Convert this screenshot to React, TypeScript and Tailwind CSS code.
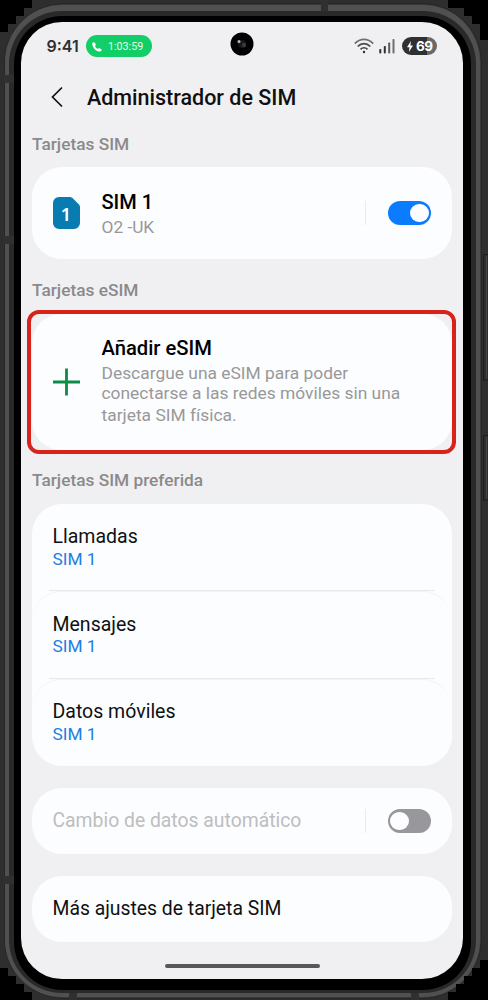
import type { ReactNode } from "react";

function SectionLabel({ children }: { children: ReactNode }) {
  return <h2 className="-mt-[0.5px] mb-[0.5px] pl-[11px] text-[17.3px] leading-5 font-medium text-[#8a8a8c]">{children}</h2>;
}

function Card({ className, children }: { className: string; children: ReactNode }) {
  return <section className={`mr-[11px] ml-[10.5px] rounded-[30px] bg-[#fcfdfe] ${className}`}>{children}</section>;
}

function Toggle({ on }: { on: boolean }) {
  return (
    <div className="flex items-center">
      <div className="mr-[21.5px] h-6 w-px bg-[#ebebed]" />
      <button
        role="switch"
        aria-checked={on}
        className={`flex h-6 w-[43.5px] items-center rounded-full px-[2.5px] ${on ? "justify-end bg-[#0a7cfd]" : "justify-start bg-[#98979c]"}`}
      >
        <span className="size-[18.5px] rounded-full bg-[#fdfdff]" />
      </button>
    </div>
  );
}

function StatusBar() {
  return (
    <header className="flex h-12 items-center pr-[26px] pl-[25.5px]">
      <span className="-mt-px w-[39.5px] font-['Inter',sans-serif] text-[16px] leading-5 font-semibold text-[#303032]">9:41</span>
      <div className="flex h-[22px] w-[66px] items-center rounded-full bg-[#12ce66] pl-[6px]">
        <svg className="mt-px h-[10px] w-[10px]" viewBox="0 0 10 10">
          <path d="M1 .6C2 0 2.7.2 3.1 1l.6 1.4c.2.5 0 .9-.7 1.5.5 1.3 1.5 2.3 2.9 3 .6-.8 1-1 1.5-.7l1.7.9c.7.4.8.9.3 1.6C8.7 9.6 7.5 9.9 6 9.3 2.9 8.1.7 5.4.2 2.5.1 1.6.3 1 1 .6Z" fill="#fff" />
        </svg>
        <span className="mt-[2px] ml-[6px] text-[10.7px] leading-3 text-[#e2ffef]">1:03:59</span>
      </div>
      <svg className="mt-[-4px] ml-[78px] size-6 shrink-0" viewBox="0 0 24 24">
        <circle cx="12" cy="12" r="11.5" fill="#000" />
        <circle cx="12" cy="12" r="4" fill="#15151a" />
        <circle cx="9" cy="9.5" r="1.5" fill="#b9b9bd" />
        <circle cx="14" cy="13" r="2.2" fill="#38383e" />
      </svg>
      <svg className="mt-[-1px] ml-auto h-4 w-5" viewBox="0 0 20 16" fill="none" stroke="#4b4b4d" strokeWidth="1.7">
        <path d="M.8 5.6C6-.1 14-.1 19.2 5.6" stroke="#717173" />
        <path d="M3.7 8.5c3.6-3.8 9-3.8 12.6 0" />
        <path d="M6.5 11.3c2-2 5-2 7 0" />
        <circle cx="10" cy="14" r="1.2" fill="#303032" stroke="none" />
      </svg>
      <svg className="mt-[-1px] ml-[5px] h-4 w-4" viewBox="0 0 16 16">
        <rect x=".3" y="11" width="2" height="4.5" rx=".7" fill="#303032" />
        <rect x="4.8" y="8" width="2" height="7.5" rx=".7" fill="#303032" />
        <rect x="9.2" y="4.5" width="2" height="11" rx=".7" fill="#5b5b5e" />
        <rect x="13.5" y="1" width="2" height="14.5" rx=".7" fill="#6e6e71" />
      </svg>
      <div className="ml-[7px] flex h-[18px] w-[35px] items-center overflow-hidden rounded-full bg-[linear-gradient(90deg,#303032_72%,#69696b_72%)] pl-[5px]">
        <svg className="h-[11px] w-[6px]" viewBox="0 0 6 11">
          <path d="M4 0 0 6.2h2.5L1.9 11 6 4.6H3.4Z" fill="#fff" />
        </svg>
        <span className="ml-[3px] font-['Inter',sans-serif] text-[13.5px] leading-4 font-bold tracking-[-0.4px] text-white">69</span>
      </div>
    </header>
  );
}

const defaults = ["Llamadas", "Mensajes", "Datos móviles"];

function Screen() {
  return (
    <main className="flex h-[957px] w-[442px] flex-col overflow-hidden rounded-[41px] bg-[#f0f0f2] font-['Roboto',sans-serif]">
      <StatusBar />
      <div className="flex h-[54px] items-center pl-[30px]">
        <svg className="h-5 w-3" viewBox="0 0 12 20" fill="none" stroke="#111" strokeWidth="1.7" strokeLinecap="round">
          <path d="M10.5 1 1.5 10l9 9" />
        </svg>
        <h1 className="mt-[2px] ml-6 text-[21.5px] leading-7 font-medium text-[#101012]">Administrador de SIM</h1>
      </div>
      <div className="h-[10px]" />
      <SectionLabel>Tarjetas SIM</SectionLabel>
      <Card className="mt-[13px] flex h-[92px] items-center pr-[21px] pl-[21px]">
        <svg className="h-8 w-7" viewBox="0 0 28 32">
          <path d="M6 0h10.5c1.5 0 2.5.5 3.5 1.5l5.5 5.6c1 1 1.5 2 1.5 3.2V26a6 6 0 0 1-6 6H6a6 6 0 0 1-6-6V6a6 6 0 0 1 6-6Z" fill="#087cb0" />
          <text x="13" y="23.5" textAnchor="middle" fontSize="18" fontWeight="600" fill="#fff" fontFamily="Noto Sans">1</text>
        </svg>
        <div className="ml-[21px] flex-1">
          <p className="text-[20px] leading-6 font-medium text-black">SIM 1</p>
          <p className="pt-[3px] text-[17.3px] leading-5 text-[#98989a]">O2 -UK</p>
        </div>
        <Toggle on />
      </Card>
      <div className="h-[21px]" />
      <SectionLabel>Tarjetas eSIM</SectionLabel>
      <div className="mt-[10px] mr-[7px] ml-[5.5px] h-[144px] shrink-0 rounded-[12px] border-4 border-[#d8231b] bg-[#f0f0f2]">
        <section className="ml-px flex h-full items-center rounded-[29px] bg-[#fcfdfe] pl-[21px]">
          <svg className="-mt-px h-7 w-[27px] shrink-0" viewBox="0 0 27 28" fill="none" stroke="#0b8d45" strokeWidth="2.8">
            <path d="M0 14h27M13.5.5v27" />
          </svg>
          <div className="-mt-[2px] ml-[22px]">
            <p className="text-[20.2px] leading-6 font-medium text-black">Añadir eSIM</p>
            <p className="mt-[3px] flex flex-col text-[17.4px] whitespace-nowrap text-[#98989a]">
              <span className="leading-5">Descargue una eSIM para poder</span>
              <span className="leading-5">conectarse a las redes móviles sin una</span>
              <span className="leading-6">tarjeta SIM física.</span>
            </p>
          </div>
        </section>
      </div>
      <div className="h-[16.5px]" />
      <SectionLabel>Tarjetas SIM preferida</SectionLabel>
      <Card className="mt-[13.5px] flex h-[262px] shrink-0 flex-col">
        {defaults.map((name, i) => (
          <div key={name} className="h-[87.3px] shrink-0">
            {i > 0 && <div className="mx-[17px] -mt-px h-px bg-[#e9e9eb]" />}
            <div className={`h-full rounded-t-[30px] pl-[21px] ${i > 0 ? "border-t border-[#f3f3f5] pt-[20.5px]" : "pt-[21px]"}`}>
              <p className="text-[19.5px] leading-6 text-[#101012]">{name}</p>
              <p className="-mt-[0.5px] text-[17.3px] leading-5 text-[#1a80e4]">SIM 1</p>
            </div>
          </div>
        ))}
      </Card>
      <Card className="mt-[21.5px] flex h-[66.5px] shrink-0 items-center justify-between pr-[21px] pl-[21px]">
        <p className="text-[19.35px] leading-6 text-[#bdbdbf]">Cambio de datos automático</p>
        <Toggle on={false} />
      </Card>
      <Card className="mt-[21.5px] flex h-[66.5px] shrink-0 items-center pl-[21px]">
        <p className="text-[19.35px] leading-6 text-[#101012]">Más ajustes de tarjeta SIM</p>
      </Card>
      <div className="mt-[22px] ml-[143.5px] h-1 w-[155px] shrink-0 rounded-full bg-[#58585b]" />
    </main>
  );
}

function FrameDetails() {
  return (
    <svg className="pointer-events-none absolute inset-0" width="488" height="1000" viewBox="0 0 488 1000">
      <path d="M0 0h32v8h-8v8h-8v8H8v8H0ZM448 0h40v40h-8V24h-8v-8h-8V8h-16ZM0 968h8v8h8v8h8v8h8v8H0ZM488 960h-8v8h-8v8h-8v8h-8v8h-8v8h40Z" fill="#000" />
      <path d="M4 75h10v8H4ZM4 236h10v8H4ZM4 876h10v8H4ZM321 0h7v11h-7ZM69 993h8v7h-8ZM411 993h8v7h-8Z" fill="#303030" />
      <path d="M488 254.5h-4.5v125.5h4.5M488 435.5h-4.5v64.5h4.5" fill="none" stroke="#1c1c1c" />
      <path d="M486.5 256v123M486.5 437v62" stroke="#444" />
    </svg>
  );
}

export default function App() {
  return (
    <div className="relative h-[1000px] w-[488px] overflow-hidden bg-[#2e2e2e] pt-[3px] pl-[4px]">
      <div className="h-[996px] w-[478px] rounded-[60px] border border-[#262626] bg-[#3a3a3a] pt-[1px]">
        <div className="h-[992px] w-[475px] rounded-[57px] bg-[#505050] pt-[6px] pl-1">
          <div className="h-[982px] w-[467px] rounded-[53px] bg-[#292929] pt-[5px] pl-[5px]">
            <div className="h-[974px] w-[457px] rounded-[48px] bg-black pt-[6px] pl-[7px]">
              <Screen />
            </div>
          </div>
        </div>
      </div>
      <FrameDetails />
    </div>
  );
}
